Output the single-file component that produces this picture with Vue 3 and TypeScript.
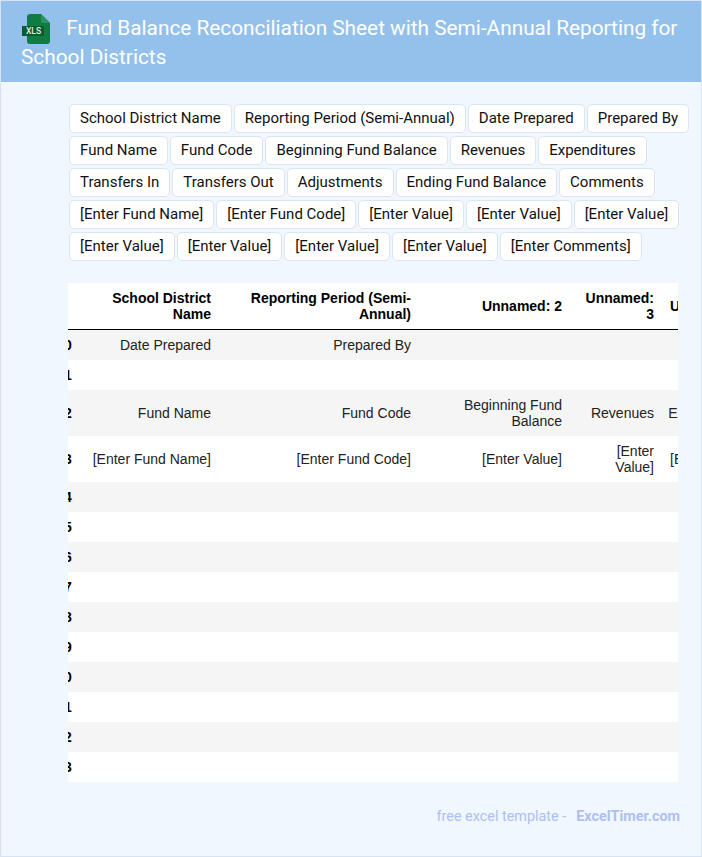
<script setup lang="ts">
const chips: string[] = [
  'School District Name', 'Reporting Period (Semi-Annual)', 'Date Prepared', 'Prepared By',
  'Fund Name', 'Fund Code', 'Beginning Fund Balance', 'Revenues', 'Expenditures',
  'Transfers In', 'Transfers Out', 'Adjustments', 'Ending Fund Balance', 'Comments',
  '[Enter Fund Name]', '[Enter Fund Code]', '[Enter Value]', '[Enter Value]', '[Enter Value]',
  '[Enter Value]', '[Enter Value]', '[Enter Value]', '[Enter Value]', '[Enter Comments]',
]
const headers: string[] = ['', 'School District Name', 'Reporting Period (Semi-Annual)', 'Unnamed: 2', 'Unnamed: 3', 'Unnamed: 4']
const filled: string[][] = [
  ['Date Prepared', 'Prepared By', '', '', ''],
  ['', '', '', '', ''],
  ['Fund Name', 'Fund Code', 'Beginning Fund Balance', 'Revenues', 'Expenditures'],
  ['[Enter Fund Name]', '[Enter Fund Code]', '[Enter Value]', '[Enter Value]', '[Enter Value]'],
]
const rows: { index: number; cells: string[] }[] = Array.from({ length: 14 }, (_, index) => ({
  index,
  cells: filled[index] ?? ['', '', '', '', ''],
}))
</script>

<template>
  <div class="page">
    <header class="banner">
      <h1 class="title">
        <span class="file-icon">
          <svg width="30" height="30" viewBox="0 0 30 30" aria-hidden="true">
            <path d="M9 0H20L29 9V27a3 3 0 0 1-3 3H9a3 3 0 0 1-3-3V3a3 3 0 0 1 3-3Z" fill="#107c41" />
            <path d="M20 0V7a2 2 0 0 0 2 2h7Z" fill="#2b9560" />
            <rect x="1" y="12" width="22" height="10" fill="#0c5a30" />
          </svg>
          <span class="file-label">XLS</span>
        </span>
        Fund Balance Reconciliation Sheet with Semi-Annual Reporting for School Districts
      </h1>
    </header>

    <section class="chips">
      <span v-for="(chip, i) in chips" :key="i" class="chip">{{ chip }}</span>
    </section>

    <section class="table-wrap">
      <table class="sheet">
        <colgroup>
          <col class="c0" />
          <col class="c1" />
          <col class="c2" />
          <col class="c3" />
          <col class="c4" />
          <col class="c5" />
        </colgroup>
        <thead>
          <tr>
            <th v-for="(h, i) in headers" :key="i">{{ h }}</th>
          </tr>
        </thead>
        <tbody>
          <tr v-for="row in rows" :key="row.index">
            <th class="idx">{{ row.index }}</th>
            <td v-for="(c, j) in row.cells" :key="j">{{ c }}</td>
          </tr>
        </tbody>
      </table>
    </section>

    <footer class="foot">
      <span>free excel template -</span>
      <strong>ExcelTimer.com</strong>
    </footer>
  </div>
</template>

<style>
html,
body {
  margin: 0;
  padding: 0;
}
</style>

<style scoped>
.page {
  box-sizing: border-box;
  width: 702px;
  height: 857px;
  background: #f0f7ff;
  border: 1px solid #d7e3f0;
  font-family: Roboto, sans-serif;
  overflow: hidden;
}
.banner {
  background: #93c1ec;
  height: 81px;
  box-sizing: border-box;
  padding: 13px 20px 0;
}
.title {
  margin: 0;
  font-size: 20.8px;
  font-weight: 400;
  line-height: 29px;
  color: #fff;
}
.file-icon {
  position: relative;
  display: inline-block;
  width: 30px;
  height: 30px;
  margin: -4px 10px -4px 0;
  vertical-align: -5px;
}
.file-icon svg {
  display: block;
}
.file-label {
  position: absolute;
  left: 5px;
  top: 12px;
  font-size: 8.5px;
  line-height: 10px;
  font-weight: 500;
  color: #e3f0e8;
  letter-spacing: 0;
}
.chips {
  display: flex;
  flex-wrap: wrap;
  gap: 3px 2px;
  margin: 22px 10px 0 68px;
}
.chip {
  box-sizing: border-box;
  height: 29px;
  padding: 0 10px;
  border: 1px solid #dbe6f2;
  border-radius: 5px;
  background: #fff;
  font-size: 15px;
  line-height: 27px;
  color: #111;
  white-space: nowrap;
}
.table-wrap {
  margin: 22px 23px 0 67px;
  width: 610px;
  overflow: hidden;
  background: #fff;
}
.sheet {
  table-layout: fixed;
  width: 689px;
  margin-left: -79px;
  border-collapse: collapse;
  font-family: "Liberation Sans", Arial, sans-serif;
  font-size: 14px;
  line-height: 16px;
  color: #222;
}
.c0 { width: 90px; }
.c1 { width: 140px; }
.c2 { width: 200px; }
.c3 { width: 151px; }
.c4 { width: 92px; }
.c5 { width: 96px; }
th,
td {
  padding: 7px 8px;
  text-align: right;
  vertical-align: middle;
}
th:last-child,
td:last-child {
  padding-left: 6px;
}
thead th {
  font-weight: 700;
  color: #000;
  border-bottom: 1px solid #000;
}
.idx {
  padding-right: 7.2px;
  font-weight: 700;
  color: #000;
}
tbody tr:nth-child(odd) {
  background: #f5f5f5;
}
.foot {
  display: flex;
  justify-content: flex-end;
  gap: 10px;
  margin: 27px 21px 0 0;
  font-size: 14.4px;
  line-height: 16px;
  color: #adc0f0;
}
.foot strong {
  font-weight: 700;
}
</style>
